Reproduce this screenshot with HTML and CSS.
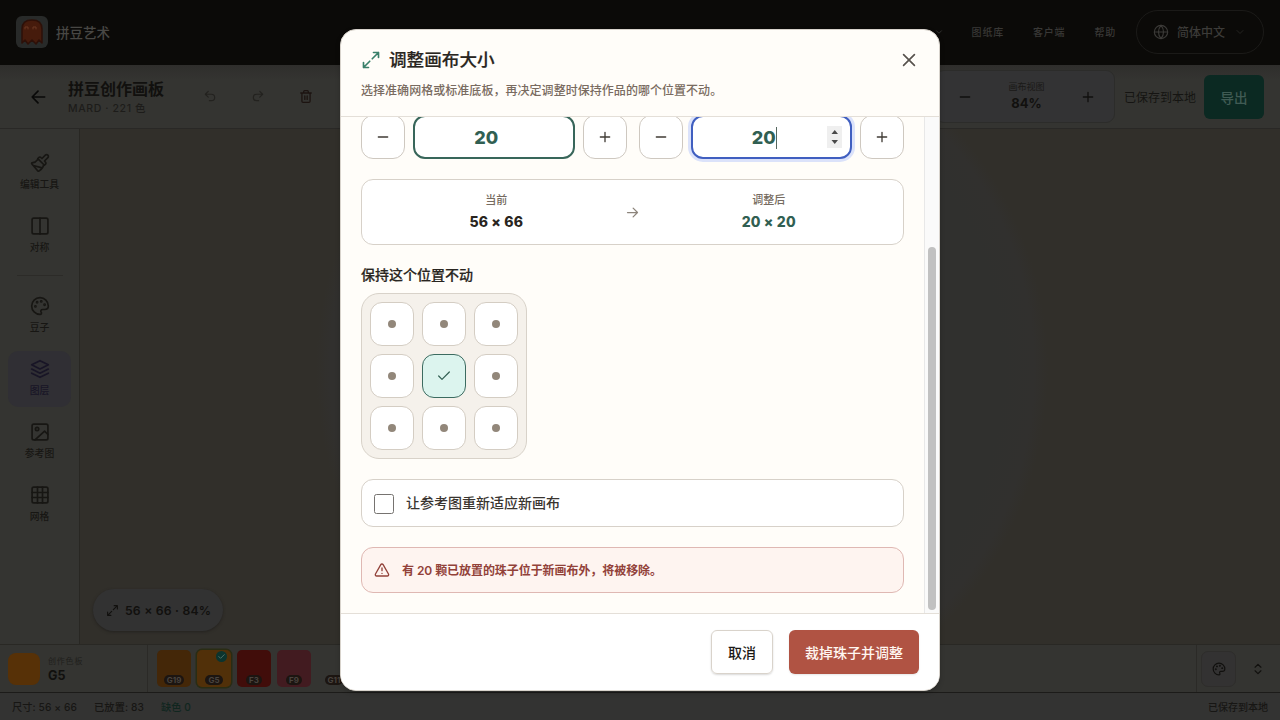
FILE: index.html
```html
<!DOCTYPE html>
<html lang="zh-CN">
<head>
<meta charset="utf-8">
<title>拼豆艺术</title>
<link rel="stylesheet" href="styles.css">
</head>
<body>
<svg class="defs" aria-hidden="true">
  <symbol id="palette" viewBox="0 0 24 24"><path d="M12 22a10 10 0 1 1 10-10c0 2.8-2.2 4.2-4.5 4.2H15a2 2 0 0 0-1.6 3.2c.8 1 .3 2.6-1.4 2.6z"/><circle cx="13.5" cy="6.5" r=".7"/><circle cx="17.5" cy="10.5" r=".7"/><circle cx="8.5" cy="7.5" r=".7"/><circle cx="6.5" cy="12.5" r=".7"/></symbol>
  <symbol id="scale" viewBox="0 0 24 24"><path d="M15 3h6v6M9 21H3v-6M21 3l-7.5 7.5M3 21l7.5-7.5"/></symbol>
  <symbol id="minus" viewBox="0 0 24 24"><path d="M5 12h14"/></symbol>
  <symbol id="plus" viewBox="0 0 24 24"><path d="M5 12h14M12 5v14"/></symbol>
  <symbol id="chev" viewBox="0 0 24 24"><path d="m6 9 6 6 6-6"/></symbol>
</svg>
<div class="app">
  <header class="topbar">
    <div class="logo"><svg viewBox="0 0 32 32"><path class="ghost" d="M6 27V13q0-9 10-9t10 9v14l-3-3-3 4-4-4-4 4-3-4z"/><path class="ghost-eyes" d="M9 13v-2h3v2m5 0v-2h3v2"/></svg></div>
    <span class="brand">拼豆艺术</span>
    <nav class="nav">
      <svg class="nav-chev"><use href="#chev"/></svg>
      <span>图纸库</span><span>客户端</span><span>帮助</span>
    </nav>
    <div class="lang">
      <svg class="globe" viewBox="0 0 24 24"><circle cx="12" cy="12" r="10"/><path d="M2 12h20M12 2c-5 5.5-5 14.500 0 20 5-5.500 5-14.500 0-20"/></svg>
      <span>简体中文</span><svg class="lang-chev"><use href="#chev"/></svg>
    </div>
  </header>
  <div class="toolbar">
    <svg class="back" viewBox="0 0 24 24"><path d="m12 19-7-7 7-7M20 12H5"/></svg>
    <div class="doc"><b>拼豆创作画板</b><span>MARD · 221 色</span></div>
    <div class="history">
      <svg class="dim" viewBox="0 0 24 24"><path d="M9 14 4 9l5-5M4 9h10.500a5.500 5.500 0 0 1 0 11H11"/></svg>
      <svg class="dim" viewBox="0 0 24 24"><path d="m15 14 5-5-5-5M20 9H9.500a5.500 5.500 0 0 0 0 11H13"/></svg>
      <svg class="trash" viewBox="0 0 24 24"><path d="M3 6h18M5 6v14a2 2 0 0 0 2 2h10a2 2 0 0 0 2-2V6M8 6V4a2 2 0 0 1 2-2h4a2 2 0 0 1 2 2v2M10 11v6M14 11v6"/></svg>
    </div>
    <div class="zoom"><svg><use href="#minus"/></svg><div><span>画布视图</span><b>84%</b></div><svg><use href="#plus"/></svg></div>
    <span class="saved">已保存到本地</span>
    <div class="export"><span>导出</span></div>
  </div>
  <div class="work">
    <aside class="side">
      <div class="tool"><svg viewBox="0 0 24 24"><path d="m14.600 17.900-10.700-2.900M18.400 2.600a2.100 2.100 0 0 1 3 3L17.400 9.600l.9 1c.9.900.9 2.200 0 3.100l-1 1L9.300 6.700l1-1c.9-.9 2.200-.9 3.100 0l1 .9zM9 8c-1.800 2.700-4 3.500-6.600 3.900-.4.100-.6.500-.3.900l7.300 8.800c.3.300.8.400 1.200.2 2.100-1.500 5.400-5.100 5.400-6.800"/></svg><span>编辑工具</span></div>
      <div class="tool"><svg viewBox="0 0 24 24"><rect x="2.500" y="2.500" width="19" height="19" rx="2"/><path d="M12 2.500v19"/></svg><span>对称</span></div>
      <hr>
      <div class="tool"><svg><use href="#palette"/></svg><span>豆子</span></div>
      <div class="tool active"><svg viewBox="0 0 24 24"><path d="M12 2 2 7l10 5 10-5zM2 12l10 5 10-5M2 17l10 5 10-5"/></svg><span>图层</span></div>
      <div class="tool"><svg viewBox="0 0 24 24"><rect x="2.500" y="2.500" width="19" height="19" rx="2"/><circle cx="8.500" cy="8.500" r="2"/><path d="m21.500 15-4-4L6 21.500"/></svg><span>参考图</span></div>
      <div class="tool"><svg viewBox="0 0 24 24"><rect x="2.500" y="2.500" width="19" height="19" rx="2"/><path d="M2.500 9h19M2.500 15h19M9 2.500v19M15 2.500v19"/></svg><span>网格</span></div>
    </aside>
    <main class="canvas"><div class="pill"><svg><use href="#scale"/></svg><span>56 × 66 · 84%</span></div></main>
  </div>
  <div class="beads">
    <div class="current"><i></i><div><span>创作色板</span><b>G5</b></div></div>
    <div class="swatches">
      <div class="sw g19"><span>G19</span></div>
      <div class="sw g5"><span>G5</span><em><svg viewBox="0 0 24 24"><path d="m6 12 4 4 8-8"/></svg></em></div>
      <div class="sw f3"><span>F3</span></div>
      <div class="sw f9"><span>F9</span></div>
      <div class="sw g11"><span>G11</span></div>
    </div>
    <div class="bead-actions"><div class="palette-btn"><svg><use href="#palette"/></svg></div><svg class="updown" viewBox="0 0 24 24"><path d="m7 15 5 5 5-5M7 9l5-5 5 5"/></svg></div>
  </div>
  <footer class="status"><span>尺寸: 56 × 66</span><span>已放置: 83</span><span class="missing">缺色 0</span><span class="local">已保存到本地</span></footer>
</div>

<div class="overlay">
  <section class="modal" role="dialog">
    <header class="head">
      <div class="head-row"><svg class="head-icon"><use href="#scale"/></svg><h1>调整画布大小</h1>
      <svg class="close" viewBox="0 0 24 24"><path d="M18.500 5.500l-13 13M5.500 5.500l13 13"/></svg></div>
      <p>选择准确网格或标准底板，再决定调整时保持作品的哪个位置不动。</p>
    </header>
    <div class="scroll">
      <div class="content">
        <div class="steppers">
          <div class="stepper"><div class="btn"><svg><use href="#minus"/></svg></div><div class="num">20</div><div class="btn"><svg><use href="#plus"/></svg></div></div>
          <div class="stepper"><div class="btn"><svg><use href="#minus"/></svg></div><div class="num focus">20<i class="caret"></i><svg class="spin" viewBox="0 0 15 22"><path d="m4.500 8 3.250-4L11 8zM4.500 14l3.250 4L11 14z"/></svg></div><div class="btn"><svg><use href="#plus"/></svg></div></div>
        </div>
        <div class="compare">
          <div><span>当前</span><b>56 × 66</b></div>
          <svg viewBox="0 0 24 24"><path d="M4 12h16M13 5l7 7-7 7"/></svg>
          <div class="after"><span>调整后</span><b>20 × 20</b></div>
        </div>
        <div class="anchor">
          <h2>保持这个位置不动</h2>
          <div class="grid">
            <div><i></i></div><div><i></i></div><div><i></i></div>
            <div><i></i></div><div class="on"><svg viewBox="0 0 24 24"><path d="M20 6 9 17l-5-5"/></svg></div><div><i></i></div>
            <div><i></i></div><div><i></i></div><div><i></i></div>
          </div>
        </div>
        <div class="check"><i></i><span>让参考图重新适应新画布</span></div>
        <div class="warn"><svg viewBox="0 0 24 24"><path d="m21.700 18-8-14a2 2 0 0 0-3.500 0l-8 14A2 2 0 0 0 4 21h16a2 2 0 0 0 1.700-3M12 9v4M12 17v.1"/></svg><span>有 20 颗已放置的珠子位于新画布外，将被移除。</span></div>
      </div>
      <div class="track"><div class="thumb"></div></div>
    </div>
    <footer class="foot"><div class="cancel"><span>取消</span></div><div class="confirm"><span>裁掉珠子并调整</span></div></footer>
  </section>
</div>
</body>
</html>
```
FILE: styles.css
```css
* { box-sizing: border-box; }
body { margin: 0; width: 1280px; height: 720px; overflow: hidden; font-family: Inter, "Noto Sans CJK SC", sans-serif; background: #31302b; }
svg { fill: none; stroke: currentColor; stroke-width: 2; stroke-linecap: round; stroke-linejoin: round; flex: none; display: block; }
.defs { position: absolute; width: 0; height: 0; }
h1, h2, p { margin: 0; }

.app { height: 720px; display: flex; flex-direction: column; color: #11100e; }
.topbar { height: 65px; flex: none; background: #0b0a08; display: flex; align-items: center; padding: 0 16px 2px; color: #484744; }
.logo { width: 32px; height: 32px; border-radius: 6px; background: #282a29; }
.logo svg { width: 32px; height: 32px; }
.ghost { fill: #461b0c; stroke: #2d1008; stroke-width: 1.5; }
.ghost-eyes { stroke: #6b3823; stroke-width: 1; }
.brand { margin-left: 8px; font-size: 13.500px; font-weight: 500; }
.nav { margin-left: auto; display: flex; align-items: center; gap: 29px; font-size: 10px; letter-spacing: .8px; color: #393836; font-weight: 500; }
.nav-chev { width: 10px; height: 10px; margin-right: -1px; }
.lang { width: 128px; height: 44px; margin-left: 20px; border: 1px solid #1b1a18; border-radius: 22px; display: flex; align-items: center; padding: 0 0 0 16px; font-size: 12px; font-weight: 500; color: #3c3b38; }
.globe { width: 16px; height: 16px; margin-right: 8px; stroke-width: 1.7; }
.lang-chev { width: 12px; height: 12px; margin-left: 9px; color: #252421; }

.toolbar { height: 64px; flex: none; background: linear-gradient(#2f2e2c, #343431 15px); border-bottom: 1px solid #292826; display: flex; align-items: center; padding: 0 16px 0 28px; }
.back { width: 20px; height: 20px; color: #090908; }
.doc { margin-left: 20px; width: 112px; display: flex; flex-direction: column; }
.doc b { font-size: 16px; line-height: 22px; font-weight: 600; margin-top: 1px; }
.doc span { font-size: 10.500px; line-height: 17px; letter-spacing: .62px; color: #1d1c1a; font-weight: 500; }
.history { margin-left: 23px; display: flex; gap: 34px; }
.history svg { width: 14px; height: 14px; }
.dim { color: #23221f; }
.history .trash { color: #1c1310; width: 14px; height: 15px; stroke-width: 2.200; }
.zoom { margin-left: auto; width: 180px; height: 53px; border: 1px solid #2c2c2a; border-radius: 9px; background: #333334; display: flex; align-items: center; justify-content: space-between; padding: 0 18px 0 21px; }
.zoom svg { width: 16px; height: 16px; }
.zoom div { display: flex; flex-direction: column; align-items: center; }
.zoom span { font-size: 9px; line-height: 14px; color: #1a1917; }
.zoom b { font-size: 13px; line-height: 19px; font-weight: 700; }
.saved { font-size: 12px; margin: 0 8px 0 9px; color: #151412; }
.export { width: 60px; height: 44px; border-radius: 6px; background: #0b2922; color: #405b54; font-size: 13.500px; font-weight: 500; display: grid; place-items: center; }

.work { flex: 1; display: flex; min-height: 0; }
.side { width: 80px; border-right: 1px solid #282723; background: #343431; padding-top: 16px; display: flex; flex-direction: column; align-items: center; }
.side hr { width: 46px; height: 0; border: 0; border-top: 1px solid #2c2b28; margin: 4px 0 12px; }
.tool { width: 63px; height: 56px; margin-bottom: 7px; flex: none; border-radius: 10px; display: flex; flex-direction: column; align-items: center; padding-top: 8px; font-size: 9.800px; color: #171613; font-weight: 500; }
.tool svg { width: 20px; height: 20px; margin-bottom: 5px; stroke-width: 2; }
.tool span { line-height: 14px; }
.tool.active { background: #302f34; color: #181526; }
.canvas { flex: 1; background: radial-gradient(circle at 602px 241px, #30302e 0, #30302e 320px, #31302e 352px, #312f2a 366px); display: flex; align-items: flex-end; padding: 0 0 13px 13px; }
.pill { width: 130px; height: 42px; border-radius: 21px; background: #323232; box-shadow: 0 1px 3px #24221f; display: flex; align-items: center; gap: 6px; padding-left: 13px; font-size: 12.200px; font-weight: 600; letter-spacing: .2px; }
.pill svg { width: 13px; height: 13px; }
.beads { height: 49px; flex: none; border-top: 1px solid #292824; background: #343431; display: flex; border-bottom: 1px solid #1c1b19; }
.current { width: 148px; border-right: 1px solid #2b2a27; display: flex; align-items: center; padding-left: 8px; gap: 8px; }
.current i { width: 32px; height: 32px; border-radius: 8px; background: #573107; }
.current div { display: flex; flex-direction: column; }
.current span { font-size: 8px; letter-spacing: .8px; line-height: 13px; color: #201f1c; }
.current b { font-size: 12.500px; line-height: 15px; }
.swatches { display: flex; align-items: center; gap: 6px; padding-left: 9px; }
.sw { position: relative; width: 34px; height: 37px; border-radius: 5px; display: flex; align-items: flex-end; justify-content: center; }
.sw span { font-size: 8px; line-height: 10px; padding: 0 3px; border-radius: 5px; background: #1c1511; color: #49433e; font-weight: 700; margin-bottom: 2px; }
.g19 { background: #442708; }
.g5 { background: #513009; box-shadow: 0 0 0 1.500px #292c14; }
.f3 { background: #410d0a; }
.f9 { background: #421b20; }
.sw em { position: absolute; right: 4px; top: 1px; width: 11px; height: 11px; border-radius: 50%; background: #0c342e; color: #52736b; }
.sw em svg { width: 11px; height: 11px; }
.bead-actions { margin-left: auto; width: 84px; border-left: 1px solid #2b2a27; display: flex; align-items: center; padding-left: 4px; }
.palette-btn { width: 35px; height: 36px; border: 1px solid #2e2d2b; border-radius: 7px; display: grid; place-items: center; background: #333232; }
.palette-btn svg { width: 14px; height: 14px; }
.updown { width: 14px; height: 14px; margin-left: 15px; }
.status { height: 27px; flex: none; background: #333332; display: flex; align-items: center; gap: 17px; padding: 0 12px; font-size: 10.200px; font-weight: 500; letter-spacing: .1px; color: #171614; }
.status .missing { color: #10261f; }
.local { margin-left: auto; font-size: 10px; letter-spacing: 0; }

.overlay { position: absolute; inset: 0; display: flex; align-items: center; justify-content: center; }
.modal { width: 600px; height: 662px; border: 1px solid #d8d3cc; border-radius: 16px; overflow: hidden; background: #fffdf9; display: flex; flex-direction: column; color: #292520; box-shadow: 0 2px 5px rgba(0, 0, 0, .2); }
.head { height: 87px; flex: none; border-bottom: 1px solid #e4dfd8; padding: 17px 20px 0; }
.head-row { display: flex; align-items: center; height: 26px; }
.head-icon { width: 20px; height: 20px; color: #39806a; }
.head h1 { font-size: 17.600px; font-weight: 500; margin-left: 8px; line-height: 26px; -webkit-text-stroke: .2px currentColor; }
.close { width: 20px; height: 20px; margin-left: auto; color: #57524d; }
.head p { font-size: 12px; line-height: 18px; color: #796b60; margin-top: 9px; font-weight: 500; letter-spacing: .04px; }
.scroll { height: 496px; flex: none; display: flex; overflow: hidden; }
.content { width: 583px; padding: 0 20px; margin-top: -2px; display: flex; flex-direction: column; gap: 20px; }
.content > * { flex: none; }
.steppers { display: grid; grid-template-columns: 1fr 1fr; gap: 12px; height: 44px; }
.stepper { display: grid; grid-template-columns: 44px 1fr 44px; gap: 8px; }
.btn { border: 1px solid #cec8c0; border-radius: 12px; background: #fff; display: grid; place-items: center; color: #403b35; }
.btn svg { width: 16px; height: 16px; }
.num { position: relative; border: 2px solid #38665a; border-radius: 12px; background: #fff; display: flex; align-items: center; justify-content: center; color: #315f52; font-size: 18px; font-weight: 800; padding-right: 15px; }
.num.focus { border-color: #405fc0; box-shadow: 0 0 0 3px #dbe2fa; }
.caret { position: absolute; left: 83px; top: 10px; width: 1px; height: 22px; background: #55675f; }
.spin { position: absolute; right: 8px; top: 9px; width: 15px; height: 22px; background: #efefef; fill: #4a4a4a; stroke: none; }
.compare { height: 66px; border: 1px solid #d7d1c9; border-radius: 12px; background: #fff; display: grid; grid-template-columns: 1fr 16px 1fr; align-items: center; padding: 0 6px; }
.compare div { display: flex; flex-direction: column; align-items: center; }
.compare span { font-size: 11px; line-height: 17px; color: #766b60; font-weight: 500; }
.compare b { font-size: 14px; line-height: 22px; margin-top: 2px; font-weight: 800; letter-spacing: .15px; }
.compare .after b { color: #315f52; }
.compare svg { width: 15px; height: 15px; color: #8d857c; }
.anchor h2 { font-size: 14px; line-height: 20px; font-weight: 500; margin-bottom: 8px; -webkit-text-stroke: .2px currentColor; }
.grid { width: 166px; height: 166px; padding: 8px; border: 1px solid #d8d2c9; border-radius: 18px; background: #f5f1eb; display: grid; grid-template-columns: repeat(3, 44px); gap: 8px; }
.grid div { height: 44px; border: 1px solid #d4cdc3; border-radius: 12px; background: #fff; display: grid; place-items: center; }
.grid i { width: 8px; height: 8px; border-radius: 50%; background: #92877a; }
.grid .on { background: #dcf4ee; border-color: #3c6b60; color: #315f52; }
.grid svg { width: 16px; height: 16px; stroke-width: 1.800; }
.check { height: 48px; border: 1px solid #d7d1c9; border-radius: 12px; background: #fff; display: flex; align-items: center; padding-left: 12px; gap: 12px; font-size: 14px; font-weight: 500; color: #3a3530; }
.check i { width: 20px; height: 20px; border: 1px solid #767370; border-radius: 2.500px; margin-top: 2px; }
.check span { padding-bottom: 2px; }
.warn { height: 46px; border: 1px solid #dfb8b3; border-radius: 12px; background: #fef4f0; display: flex; align-items: center; padding-left: 12px; gap: 12px; font-size: 12px; font-weight: 600; color: #924139; letter-spacing: -.06px; }
.warn svg { width: 16px; height: 16px; }
.warn span { padding-bottom: 1px; }
.track { width: 15px; background: #fafafa; border-left: 1px solid #e8e8e8; padding: 130px 0 0 3px; }
.thumb { width: 8px; height: 363px; border-radius: 4px; background: #c1c1c1; }
.foot { flex: 1; border-top: 1px solid #e4dfd8; background: #fff; display: flex; justify-content: flex-end; gap: 16px; padding: 16px 20px 0; }
.foot div { height: 44px; border-radius: 6px; display: grid; place-items: center; font-size: 14px; font-weight: 500; }
.foot span { padding-bottom: 1px; }
.cancel { width: 62px; border: 1px solid #d9d3cb; box-shadow: 0 1px 2px rgba(0, 0, 0, .15); color: #1b1815; }
.confirm { width: 130px; background: #b05343; color: #fff6f0; box-shadow: 0 1px 2px rgba(0, 0, 0, .1); }
```
